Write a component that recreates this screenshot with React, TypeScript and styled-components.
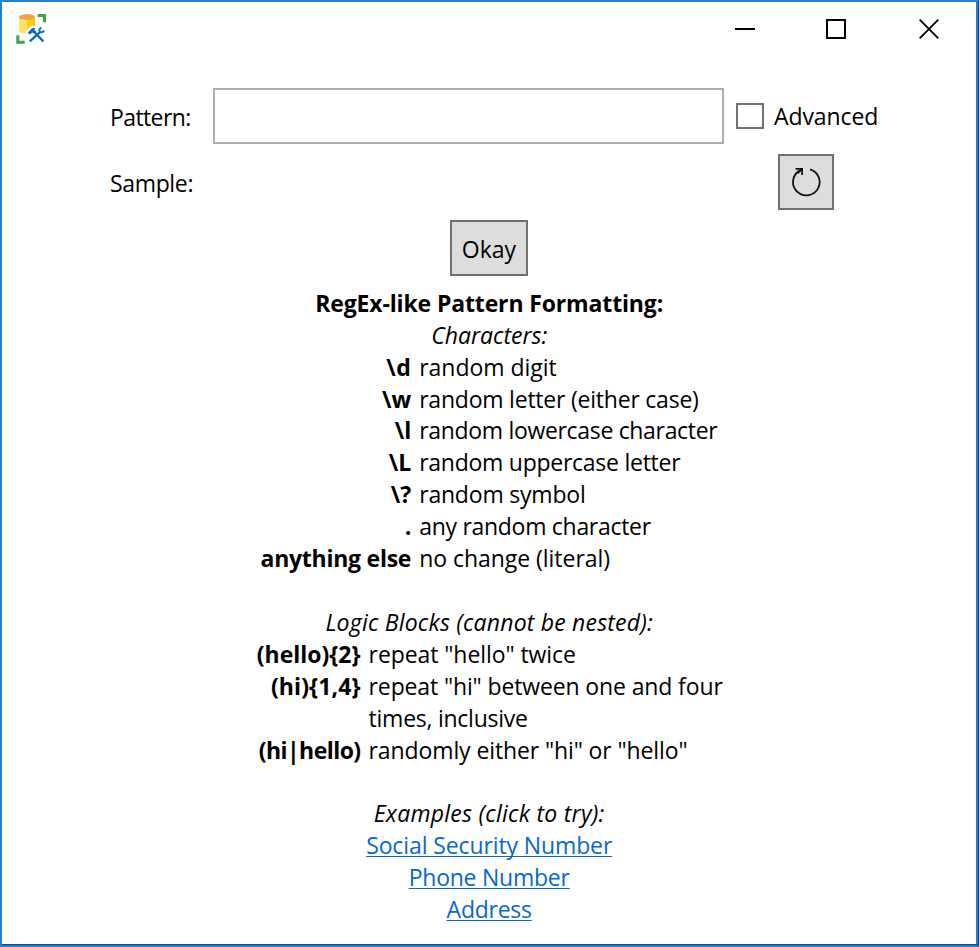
import React, { useState } from 'react';
import styled, { createGlobalStyle } from 'styled-components';

const GlobalStyle = createGlobalStyle`
  * { box-sizing: border-box; }
  body {
    margin: 0;
    background: #fff;
    overflow: hidden;
  }
`;

const Window = styled.div`
  width: 979px;
  height: 947px;
  display: flex;
  flex-direction: column;
  background: #fff;
  color: #000;
  border: 2px solid #1a80d9;
  border-right: 1px solid #24415f;
  box-shadow: inset 0 -1px 0 #3c434b;
  font: 23px/31.92px 'Open Sans', 'Noto Sans', sans-serif;
`;

const WindowBody = styled.div`
  flex: 1;
  margin-bottom: 1px;
  border-right: 2px solid #1a80d9;
`;

const TitleBar = styled.header`
  height: 58px;
  display: flex;
  justify-content: space-between;
`;

const AppIcon = styled.svg`
  width: 32px;
  height: 32px;
  margin: 11px 0 0 13px;
`;

const Controls = styled.div`
  display: flex;
  margin-right: 1px;
`;

const ControlButton = styled.button`
  width: 92px;
  height: 54px;
  padding: 0;
  border: 0;
  background: none;
  display: grid;
  place-items: center;

  svg { display: block; }
`;

const MaximizeButton = styled(ControlButton)`
  padding-right: 2px;
`;

const Form = styled.main`
  display: grid;
  grid-template-columns: 103px 511px 1fr;
  grid-template-rows: 56px 56px;
  row-gap: 10px;
  margin: 28px 0 0 108px;
  align-items: center;
`;

const Label = styled.label<{ $spacing: number }>`
  letter-spacing: ${(p) => p.$spacing}px;
  padding-top: 4px;
`;

const PatternInput = styled.input`
  width: 511px;
  height: 56px;
  padding: 0 8px;
  border: 2px solid #abadb3;
  background: #fff;
  font: inherit;
  outline: none;
`;

const CheckLabel = styled.label`
  display: flex;
  align-items: center;
  gap: 10px;
  margin-left: 12px;
  letter-spacing: -0.1px;
`;

const CheckBox = styled.input`
  appearance: none;
  width: 28px;
  height: 26px;
  margin: 0;
  border: 2px solid #707070;
  background: #fff;
`;

const CheckText = styled.span`
  padding-top: 1px;
`;

const Button = styled.button<{ $width: number }>`
  width: ${(p) => p.$width}px;
  height: 56px;
  padding: 3px 0 0;
  border: 2px solid #707070;
  background: #ddd;
  color: #000;
  font: inherit;
  display: grid;
  place-items: center;
`;

const RefreshButton = styled(Button)`
  grid-column: 3;
  margin-left: 54px;
  padding: 0;
`;

const OkayRow = styled.div`
  display: flex;
  margin: 10px 0 11.75px 448px;
`;

const Help = styled.section`
  width: 470px;
  margin-left: 252.2px;
  display: flex;
  flex-direction: column;
`;

const Heading = styled.h1`
  margin: 0;
  font: inherit;
  font-weight: 700;
  text-align: center;
  letter-spacing: -0.14px;
`;

const Subheading = styled.h2<{ $spacing?: number }>`
  margin: 0;
  font: inherit;
  font-style: italic;
  text-align: center;
  white-space: nowrap;
  letter-spacing: ${(p) => p.$spacing ?? 0}px;
`;

const Terms = styled.dl<{ $keyWidth: number }>`
  display: grid;
  grid-template-columns: ${(p) => p.$keyWidth}px 1fr;
  column-gap: 8px;
  margin: 0 0 31.92px;
`;

const Term = styled.dt<{ $spacing: number }>`
  font-weight: 700;
  text-align: right;
  white-space: nowrap;
  letter-spacing: ${(p) => p.$spacing}px;
`;

const Definition = styled.dd<{ $spacing: number }>`
  margin: 0;
  white-space: nowrap;
  letter-spacing: ${(p) => p.$spacing}px;
`;

const Examples = styled.nav`
  display: flex;
  flex-direction: column;
  align-items: center;
`;

const ExampleLink = styled.a<{ $spacing: number }>`
  color: #0b66cc;
  letter-spacing: ${(p) => p.$spacing}px;
  text-decoration: underline;
  text-decoration-thickness: 1.4px;
  text-underline-offset: 2px;
  text-decoration-skip-ink: none;
`;

type Line = { text: string; spacing?: number };
type Entry = { term: string; termSpacing?: number; lines: Line[] };

const characters: Entry[] = [
  { term: '\\d', termSpacing: 0.4, lines: [{ text: 'random digit', spacing: -0.03 }] },
  { term: '\\w', lines: [{ text: 'random letter (either case)', spacing: -0.22 }] },
  { term: '\\l', lines: [{ text: 'random lowercase character', spacing: -0.32 }] },
  { term: '\\L', lines: [{ text: 'random uppercase letter', spacing: -0.26 }] },
  { term: '\\?', lines: [{ text: 'random symbol', spacing: -0.2 }] },
  { term: '.', lines: [{ text: 'any random character', spacing: -0.29 }] },
  { term: 'anything else', termSpacing: -0.25, lines: [{ text: 'no change (literal)', spacing: -0.04 }] },
];

const logicBlocks: Entry[] = [
  { term: '(hello){2}', termSpacing: 0, lines: [{ text: 'repeat "hello" twice', spacing: -0.08 }] },
  {
    term: '(hi){1,4}',
    termSpacing: 0.1,
    lines: [
      { text: 'repeat "hi" between one and four', spacing: -0.13 },
      { text: 'times, inclusive', spacing: -0.25 },
    ],
  },
  { term: '(hi|hello)', termSpacing: -0.55, lines: [{ text: 'randomly either "hi" or "hello"', spacing: -0.11 }] },
];

const examples: Line[] = [
  { text: 'Social Security Number', spacing: -0.11 },
  { text: 'Phone Number', spacing: -0.24 },
  { text: 'Address', spacing: -0.25 },
];

const TermList = ({ entries, keyWidth }: { entries: Entry[]; keyWidth: number }) => (
  <Terms $keyWidth={keyWidth}>
    {entries.map(({ term, termSpacing = 0, lines }) => (
      <React.Fragment key={term}>
        <Term $spacing={termSpacing}>{term}</Term>
        <div>
          {lines.map(({ text, spacing = 0 }) => (
            <Definition key={text} $spacing={spacing}>{text}</Definition>
          ))}
        </div>
      </React.Fragment>
    ))}
  </Terms>
);

/* Database cylinder framed by green corners, with a crossed hammer and wrench. */
const Logo = () => (
  <AppIcon viewBox="0 0 32 32" aria-hidden="true">
    <path d="M4 4v14c0 1.600 3.600 2.800 8 2.800s8-1.200 8-2.800V4z" fill="#ffe26b" />
    <path d="M12 4v16.800c4.400 0 8-1.200 8-2.800V4z" fill="#fccf00" />
    <ellipse cx="12" cy="4" rx="8" ry="3" fill="#eda552" />
    <path d="M22.700 1H31v8.300h-3V4h-5.300zM1.300 22.300h3v5.400h5.400v3H1.300z" fill="#43a047" />
    <g fill="none" stroke="#fff" strokeWidth="5">
      <path d="M12 20.500l5-5h4M17 17l11 11M15 28l11-10" />
    </g>
    <g fill="none" stroke="#0a6ebd">
      <path d="M18 17.500l10.300 10.800M14.800 28.300L25.500 18.700" strokeWidth="2.400" />
      <path d="M12.800 19.800l2 1.800 2.600-2.200 1.500 1.200 2.200-2.200-1.800-1.900 1.200-1.200c-1.800-.5-3.600-.2-4.800 1.100z" fill="#0a6ebd" stroke="none" />
      <path d="M26.300 14.600c-2 1.200-2.500 2.800-1.500 4s3.200.9 4.300-1" strokeWidth="2" />
    </g>
  </AppIcon>
);

export default function App() {
  const [pattern, setPattern] = useState('');

  return (
    <>
      <GlobalStyle />
      <Window>
        <WindowBody>
          <TitleBar>
            <Logo />
            <Controls>
              <ControlButton aria-label="Minimize">
                <svg width="20" height="20"><path d="M0 10h20" stroke="#000" strokeWidth="2" /></svg>
              </ControlButton>
              <MaximizeButton aria-label="Maximize">
                <svg width="20" height="20"><path d="M1 1h18v18H1z" fill="none" stroke="#000" strokeWidth="2" /></svg>
              </MaximizeButton>
              <ControlButton aria-label="Close">
                <svg width="20" height="20"><path d="M.7.7l18.600 18.600M19.300.7L.7 19.300" stroke="#000" strokeWidth="1.900" /></svg>
              </ControlButton>
            </Controls>
          </TitleBar>
          <Form>
            <Label htmlFor="pattern" $spacing={-0.6}>Pattern:</Label>
            <PatternInput id="pattern" value={pattern} onChange={(e) => setPattern(e.target.value)} />
            <CheckLabel>
              <CheckBox type="checkbox" />
              <CheckText>Advanced</CheckText>
            </CheckLabel>
            <Label as="span" $spacing={-0.35}>Sample:</Label>
            <RefreshButton $width={56} aria-label="Refresh sample">
              <svg width="32" height="32" viewBox="0 0 32 32" fill="none" stroke="#111" strokeWidth="1.800">
                <path d="M20 3.300A13.300 13.300 0 1 1 9.600 4.600" />
                <path d="M5.500 2.800h6.600v6.200" />
                <path d="M7.500 7.400l4.600-4.600" strokeWidth="2" />
              </svg>
            </RefreshButton>
          </Form>
          <OkayRow>
            <Button $width={78}>Okay</Button>
          </OkayRow>
          <Help>
            <Heading>RegEx-like Pattern Formatting:</Heading>
            <Subheading>Characters:</Subheading>
            <TermList entries={characters} keyWidth={157} />
            <Subheading $spacing={0.2}>Logic Blocks (cannot be nested):</Subheading>
            <TermList entries={logicBlocks} keyWidth={106.4} />
            <Subheading $spacing={0.26}>Examples (click to try):</Subheading>
            <Examples>
              {examples.map(({ text, spacing = 0 }) => (
                <ExampleLink key={text} href="#" $spacing={spacing}>{text}</ExampleLink>
              ))}
            </Examples>
          </Help>
        </WindowBody>
      </Window>
    </>
  );
}
